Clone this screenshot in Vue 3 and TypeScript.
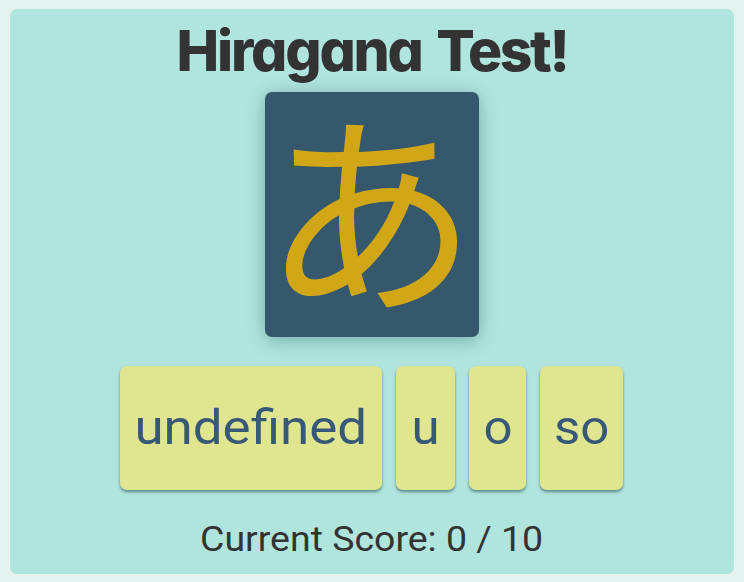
<script setup lang="ts">
import { ref } from 'vue'

interface Choice {
  label: string
  size: 'long' | 'u' | 'o' | 'so'
}

const kana = ref('あ')
const score = ref(0)
const total = 10
const choices: Choice[] = [
  { label: 'undefined', size: 'long' },
  { label: 'u', size: 'u' },
  { label: 'o', size: 'o' },
  { label: 'so', size: 'so' },
]
</script>

<template>
  <main class="page">
    <section class="panel">
      <h1 class="title"><span class="first">Hiragana</span><span class="second">Test!</span></h1>
      <div class="card"><span class="kana">{{ kana }}</span></div>
      <div class="choices">
        <button v-for="choice in choices" :key="choice.label" class="choice" :class="choice.size">
          <span class="label">{{ choice.label }}</span>
        </button>
      </div>
      <p class="score">Current Score: {{ score }} / {{ total }}</p>
    </section>
  </main>
</template>

<style>
body {
  background: #e4f3ef;
}
</style>

<style scoped>
.page {
  box-sizing: border-box;
  width: 744px;
  height: 582px;
  padding: 9px 10px 8px 10px;
  background: #e4f3ef;
}
.panel {
  box-sizing: border-box;
  height: 565px;
  border-radius: 7px;
  background: #b0e5dd;
  display: flex;
  flex-direction: column;
  align-items: center;
  color: #333;
  font-family: Roboto, "Liberation Sans", sans-serif;
}
.title {
  margin: 0;
  width: 391px;
  height: 83px;
  display: flex;
  justify-content: space-between;
  font-family: Inter, "Liberation Sans", sans-serif;
  font-size: 57px;
  font-weight: 800;
  line-height: 83px;
  white-space: nowrap;
  font-feature-settings: "cv11" 1;
}
.first {
  letter-spacing: -2.2px;
}
.second {
  letter-spacing: -2.4px;
}
.card {
  flex: none;
  width: 214px;
  height: 245px;
  border-radius: 7px;
  background: #35586d;
  box-shadow: 0 3px 18px rgba(40, 90, 100, 0.42);
  display: flex;
  align-items: center;
  justify-content: center;
}
.kana {
  color: #d1a617;
  font-family: "Noto Sans CJK JP", sans-serif;
  font-size: 215px;
  line-height: 245px;
  transform: translate(-2px, -12px);
}
.choices {
  display: flex;
  gap: 14px;
  margin: 29px 1px 0 0;
}
.choice {
  height: 124px;
  padding: 0;
  border: 0;
  border-radius: 7px;
  background: #e0e590;
  box-shadow: 0 2px 3px rgba(40, 90, 100, 0.65);
  color: #385878;
  font-family: Roboto, "Liberation Sans", sans-serif;
  font-size: 49px;
  line-height: 124px;
}
.label {
  display: inline-block;
  transform: scaleX(1.04);
}
.long {
  width: 262px;
}
.long .label {
  transform: scaleX(1.08);
}
.u {
  width: 59px;
}
.o {
  width: 57px;
}
.so {
  width: 83px;
}
.score {
  margin: 27px 1px 0 0;
  font-size: 35.5px;
  line-height: 44px;
  white-space: nowrap;
  transform: scaleX(1.055);
}
</style>
